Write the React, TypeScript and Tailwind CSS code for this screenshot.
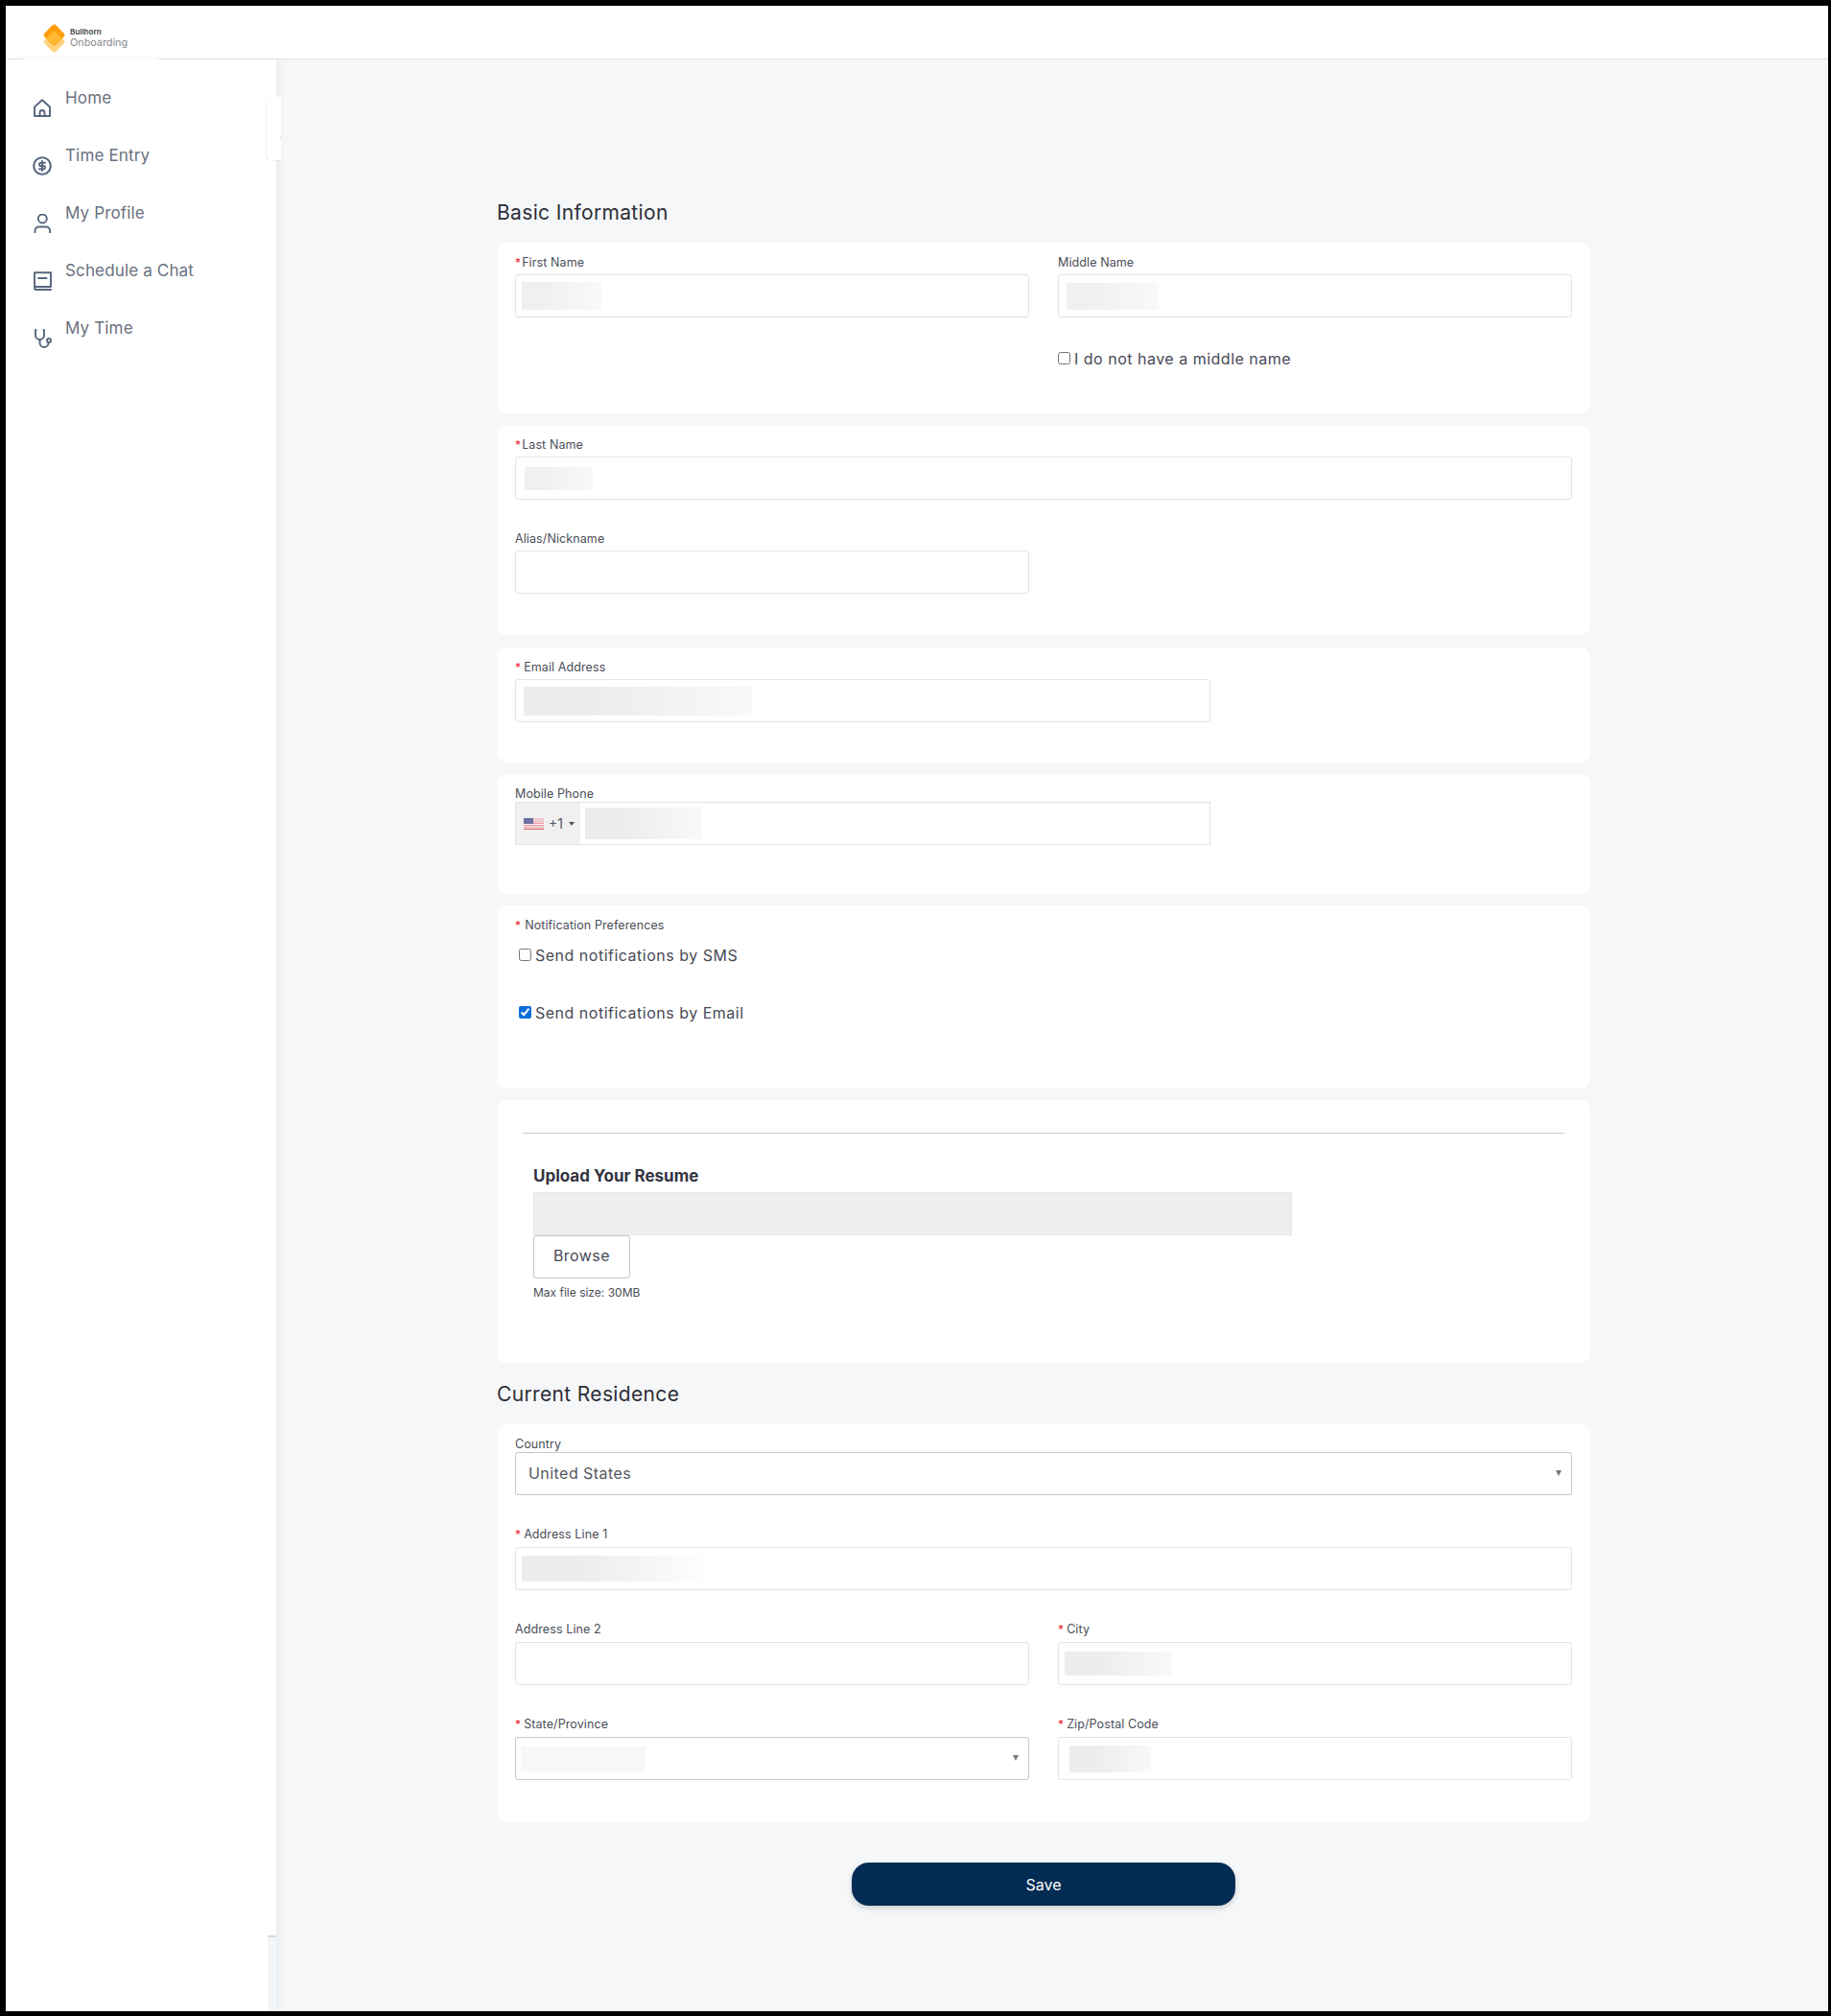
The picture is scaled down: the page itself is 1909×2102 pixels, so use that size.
import type { ReactNode } from "react";

const FONT = "font-['Inter','Liberation_Sans',sans-serif]";

function Blur({ className }: { className: string }) {
  return <div className={"bg-gradient-to-r from-[#ececec] from-30% to-[#f9f9f9] " + className} />;
}

function Field({
  label,
  required,
  tight,
  spaced,
  className = "",
  children,
}: {
  label: string;
  required?: boolean;
  tight?: boolean;
  spaced?: boolean;
  className?: string;
  children?: ReactNode;
}) {
  return (
    <div className={className}>
      <div className={"h-[20px] leading-[20px] text-[12.5px] tracking-[0.1px] text-[#4b4e58] " + (spaced ? "mb-[3px]" : "mb-[2px]")}>
        {required && <span className={"text-[#e5202e] text-[12px] " + (tight ? "mr-[1px]" : "mr-[3px]")}>*</span>}
        {label}
      </div>
      {children}
    </div>
  );
}

function Input({ children, className = "" }: { children?: ReactNode; className?: string }) {
  return (
    <div className={"h-[45px] bg-white border border-[#e3e4e8] rounded-[3px] flex items-center " + className}>
      {children}
    </div>
  );
}

function Select({ children }: { children?: ReactNode }) {
  return (
    <div className="relative h-[45px] bg-white border border-[#c6c7cb] rounded-[3px] flex items-center">
      {children}
      <span className="absolute right-[10px] top-[18px] w-0 h-0 border-l-[3.5px] border-r-[3.5px] border-t-[6px] border-l-transparent border-r-transparent border-t-[#777]" />
    </div>
  );
}

function Check({ label, checked }: { label: string; checked?: boolean }) {
  return (
    <label className="flex items-center h-[20px] text-[16px] tracking-[0.5px] text-[#474a56]">
      <input type="checkbox" defaultChecked={checked} className="w-[13px] h-[13px] m-0 mr-[4px] mb-[2px] accent-[#0b6fd8]" />
      {label}
    </label>
  );
}

function Card({ className, children }: { className: string; children: ReactNode }) {
  return <section className={"bg-white rounded-[10px] px-[19px] mb-[12px] " + className}>{children}</section>;
}

function Heading({ children, className = "" }: { children: ReactNode; className?: string }) {
  return (
    <h2 className={"h-[28px] leading-[28px] text-[21px] tracking-[0.35px] text-[#2c2e38] mb-[17px] " + className}>
      {children}
    </h2>
  );
}

const iconProps = {
  width: 20,
  height: 20,
  viewBox: "0 0 20 20",
  fill: "none",
  stroke: "#56667e",
  strokeWidth: 1.9,
  strokeLinecap: "round" as const,
  strokeLinejoin: "round" as const,
};

const NAV: { label: string; icon: ReactNode }[] = [
  {
    label: "Home",
    icon: (
      <svg {...iconProps}>
        <path d="M2 18V8.500l8-7.300 8 7.300V18Z" />
        <path d="M7.500 18v-3.500a2.500 2.500 0 0 1 5 0V18" />
      </svg>
    ),
  },
  {
    label: "Time Entry",
    icon: (
      <svg {...iconProps}>
        <circle cx="10" cy="10" r="8.800" strokeWidth="2.100" />
        <path d="M13 6.800H8.600a1.600 1.600 0 0 0 0 3.200h2.800a1.600 1.600 0 0 1 0 3.200H7M10 5v10" />
      </svg>
    ),
  },
  {
    label: "My Profile",
    icon: (
      <svg {...iconProps}>
        <circle cx="10.300" cy="5" r="4.500" />
        <path d="M2.500 19.500v-2a4 4 0 0 1 4-4h7.500a4 4 0 0 1 4 4v2" />
      </svg>
    ),
  },
  {
    label: "Schedule a Chat",
    icon: (
      <svg {...iconProps}>
        <path d="M2 16V1.200h17V16H3.500A1.500 1.500 0 0 0 2 17.500v.2c0 .7.600 1.300 1.300 1.300H19" />
        <path d="M6 7h8.500" />
      </svg>
    ),
  },
  {
    label: "My Time",
    icon: (
      <svg {...iconProps}>
        <path d="M3.500 1H3v5.500a4.500 4.500 0 0 0 9 0V1h-.5" />
        <path d="M7.500 11v3.500a4.500 4.500 0 0 0 9 0v-.3" />
        <circle cx="17" cy="12" r="2" />
      </svg>
    ),
  },
];

function Sidebar() {
  return (
    <aside className="relative z-10 w-[282px] shrink-0 bg-white shadow-[3px_0_8px_rgba(0,0,0,0.05)]">
      <nav className="pt-[30px]">
        {NAV.map((item) => (
          <div key={item.label} className="flex h-[60px] pl-[28px]">
            <span className="mt-[11px] w-[20px] h-[20px]">{item.icon}</span>
            <span className="ml-[14px] h-[20px] leading-[20px] text-[17px] tracking-[0.15px] text-[#697180]">
              {item.label}
            </span>
          </div>
        ))}
      </nav>
      {/* collapse handle sits over the sidebar edge */}
      <div className="absolute left-[272px] top-[39px] w-[15px] h-[66px] bg-white rounded-l-[6px] shadow-[-1px_1px_2px_rgba(0,0,0,0.06)]">
        <div className="absolute right-0 top-[41px] w-px h-[3px] bg-[#ffe3c4]" />
      </div>
      <div className="absolute right-0 bottom-0 w-[9px] h-[79px] bg-[#f3f6f9] border-t-2 border-[#d9d9db]" />
    </aside>
  );
}

export default function App() {
  return (
    <div className={"w-[1909px] h-[2102px] bg-black pl-[6px] pr-[3px] pt-[6px] pb-[5px] " + FONT}>
      <div className="h-full flex flex-col bg-white">
        <header className="relative h-[56px] shrink-0 bg-white border-b border-[#e4e5e8]">
          <div className="absolute left-[18px] top-0 w-[141px] h-[56px] bg-white">
            <svg className="absolute left-[21px] top-[19px]" width="23" height="30" viewBox="0 0 23 30">
              <rect x="3" y="10" width="17" height="17" rx="3" transform="rotate(45 11.500 18.500)" fill="#ffd47d" />
              <rect x="3" y="3" width="17" height="17" rx="3" transform="rotate(45 11.500 11.500)" fill="#ff9d0a" />
              <path d="M11.500 7 19.500 15l-6 5.500a3 3 0 0 1-4 0L3.500 15Z" fill="#ffba30" />
            </svg>
            <div className="absolute left-[49px] top-[22px] text-[8px] leading-[11px] font-bold text-[#55565c]">Bullhorn</div>
            <div className="absolute left-[49px] top-[32px] text-[10.800px] leading-[14px] text-[#86878b]">Onboarding</div>
          </div>
        </header>
        <div className="flex flex-1">
          <Sidebar />
          <main className="flex-1 bg-[#f6f7f9] pl-[230px] pt-[146px]">
            <div className="w-[1140px]">
              <Heading>Basic Information</Heading>

              <Card className="h-[178px] pt-[11px]">
                <div className="grid grid-cols-2 gap-x-[30px]">
                  <Field label="First Name" required tight>
                    <Input>
                      <Blur className="ml-[6px] w-[83px] h-[29px] from-[#f0f0f0]" />
                    </Input>
                  </Field>
                  <div>
                    <Field label="Middle Name">
                      <Input>
                        <Blur className="ml-[8px] w-[96px] h-[28px] from-[#f0f0f0]" />
                      </Input>
                    </Field>
                    <div className="mt-[33px]">
                      <Check label="I do not have a middle name" />
                    </div>
                  </div>
                </div>
              </Card>

              <Card className="h-[219px] pt-[11px]">
                <Field label="Last Name" required tight>
                  <Input>
                    <Blur className="ml-[9px] w-[71px] h-[24px] from-[#f0f0f0]" />
                  </Input>
                </Field>
                <Field label="Alias/Nickname" className="mt-[31px] w-[536px]">
                  <Input />
                </Field>
              </Card>

              <Card className="h-[120px] mt-[13px] pt-[11px]">
                <Field label="Email Address" required className="w-[725px]">
                  <Input>
                    <Blur className="ml-[8px] w-[238px] h-[30px]" />
                  </Input>
                </Field>
              </Card>

              <Card className="h-[125px] pt-[13px]">
                <div className="h-[16px] leading-[16px] text-[12.5px] tracking-[0.1px] text-[#4b4e58]">Mobile Phone</div>
                <div className="w-[725px] h-[45px] bg-white border border-[#e3e4e8] flex items-stretch">
                  <div className="w-[67px] bg-[#f0f0f0] flex items-center pl-[8px]">
                    <svg width="21" height="12" viewBox="0 0 21 12">
                      <rect width="21" height="12" fill="#f5f5f7" />
                      <path d="M0 1h21M0 3.200h21M0 5.400h21M0 7.600h21M0 9.800h21" stroke="#eb98a0" strokeWidth="1.100" />
                      <path d="M0 11.500h21" stroke="#d8606c" strokeWidth="1" />
                      <rect width="10" height="6" fill="#6a6f9e" />
                    </svg>
                    <span className="ml-[5px] mb-[1px] text-[14px] text-[#555862]">+1</span>
                    <span className="ml-[6px] w-0 h-0 border-l-[3px] border-r-[3px] border-t-[4px] border-l-transparent border-r-transparent border-t-[#555]" />
                  </div>
                  <Blur className="ml-[5px] my-auto w-[121px] h-[33px]" />
                </div>
              </Card>

              <Card className="h-[191px] pt-[11px]">
                <div className="h-[20px] leading-[20px] text-[12.5px] tracking-[0.1px] text-[#4b4e58]">
                  <span className="text-[#e5202e] text-[12px] mr-[4px]">*</span>
                  Notification Preferences
                </div>
                <div className="ml-[4px] mt-[11px]">
                  <Check label="Send notifications by SMS" />
                </div>
                <div className="ml-[4px] mt-[40px]">
                  <Check label="Send notifications by Email" checked />
                </div>
              </Card>

              <Card className="h-[274px] !px-[27px] pt-[34px]">
                <div className="h-px bg-[#c9cacd]" />
                <div className="ml-[11px]">
                  <div className="mt-[33px] h-[23px] leading-[22px] text-[17px] font-bold text-[#33343f]">Upload Your Resume</div>
                  <div className="mt-[5px] w-[791px] h-[45px] bg-[#eeeeee] border border-[#e6e6e6]" />
                  <button className="block w-[101px] h-[45px] pb-[3px] bg-white border border-[#c6c7cb] rounded-[3px] text-[16px] tracking-[0.45px] text-[#474a56]">
                    Browse
                  </button>
                  <div className="mt-[6px] h-[18px] leading-[17px] text-[12px] text-[#4b4e58]">Max file size: 30MB</div>
                </div>
              </Card>

              <Heading className="mt-[19px]">Current Residence</Heading>

              <Card className="h-[415px] pt-[13px]">
                <div className="h-[16px] leading-[16px] text-[12.5px] tracking-[0.1px] text-[#4b4e58]">Country</div>
                <Select>
                  <span className="ml-[13px] mb-[1px] text-[16px] tracking-[0.45px] text-[#555862]">United States</span>
                </Select>
                <Field label="Address Line 1" required spaced className="mt-[31px]">
                  <Input>
                    <Blur className="ml-[6px] w-[200px] h-[27px] to-[#ffffff]" />
                  </Input>
                </Field>
                <div className="mt-[31px] grid grid-cols-2 gap-x-[30px] gap-y-[31px]">
                  <Field label="Address Line 2" spaced>
                    <Input />
                  </Field>
                  <Field label="City" required spaced>
                    <Input>
                      <Blur className="ml-[6px] w-[112px] h-[25px]" />
                    </Input>
                  </Field>
                  <Field label="State/Province" required spaced>
                    <Select>
                      <div className="ml-[5px] w-[130px] h-[26px] bg-[#f6f7f9]" />
                    </Select>
                  </Field>
                  <Field label="Zip/Postal Code" required spaced>
                    <Input>
                      <Blur className="ml-[11px] w-[85px] h-[28px]" />
                    </Input>
                  </Field>
                </div>
              </Card>

              <button className="block mt-[42px] ml-[370px] w-[400px] h-[45px] bg-[#022c54] rounded-[18px] text-white text-[16px] shadow-[0_3px_6px_rgba(0,0,0,0.16)]">
                Save
              </button>
            </div>
          </main>
        </div>
      </div>
    </div>
  );
}
